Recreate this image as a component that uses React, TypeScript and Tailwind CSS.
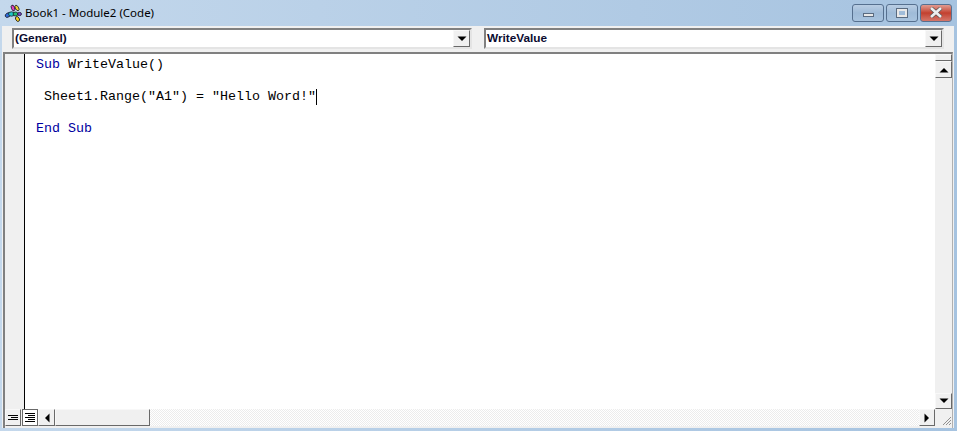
const dots = "bg-[#f0f0f0] bg-[radial-gradient(#dcdcdc_0.5px,transparent_0.6px)] bg-[length:6px_6px]";
const bevel = "border border-t-[#f8f8f8] border-l-[#f8f8f8] border-r-[#696969] border-b-[#696969]";

function Arrow({ dir }: { dir: "up" | "down" | "left" | "right" }) {
  const pts = {
    up: "0.5,7.5 5,3 9.5,7.5",
    down: "0.5,2.5 9.5,2.5 5,7",
    left: "7.5,0.5 7.5,9.5 3,5",
    right: "2.5,0.5 2.5,9.5 7,5",
  }[dir];
  return (
    <svg width="10" height="10" viewBox="0 0 10 10">
      <polygon points={pts} fill="#000" />
    </svg>
  );
}

function Combo({ label }: { label: string }) {
  return (
    <div className="flex h-[21px] flex-1 border-2 border-t-[#808080] border-l-[#808080] border-r-[#e4e4e4] border-b-[#e4e4e4] bg-white">
      <span className="flex-1 pl-[1px] text-[11.8px] leading-[17px] font-bold text-[#0b0b30]">{label}</span>
      <div className={`flex w-[17px] items-center justify-center bg-[#f0f0f0] ${bevel}`}>
        <Arrow dir="down" />
      </div>
    </div>
  );
}

function WinButton({ className, children }: { className: string; children: React.ReactNode }) {
  return (
    <div className={`flex h-[18px] w-[32px] items-center justify-center rounded-[3px] border border-[#56708f] ${className}`}>
      {children}
    </div>
  );
}

export default function App() {
  return (
    <div className="flex h-[431px] w-[957px] flex-col overflow-hidden bg-gradient-to-r from-[#c4d8ec] to-[#a6c3e0] pr-[3px] pb-[3px] pl-[2px] font-['Liberation_Sans',sans-serif]">
      {/* Title bar */}
      <div className="-ml-[2px] flex h-[26px] shrink-0 items-center justify-between pr-[2px] pl-[4px]">
        <div className="flex items-center gap-[3px]">
          <svg width="18" height="18" viewBox="0 0 18 18">
            <g stroke="#1a1a2a" strokeWidth="0.8">
              <ellipse cx="4" cy="11" rx="3" ry="2" fill="#2f6fe0" transform="rotate(-30 4 11)" />
              <ellipse cx="7.5" cy="10" rx="3" ry="2.2" fill="#20c8c8" />
              <ellipse cx="11.5" cy="10" rx="2.4" ry="2" fill="#20c070" />
              <ellipse cx="9" cy="4" rx="1.6" ry="3" fill="#e040c0" transform="rotate(-20 9 4)" />
              <ellipse cx="13" cy="4" rx="1.6" ry="3" fill="#f0d030" transform="rotate(-30 13 4)" />
              <ellipse cx="15.5" cy="10" rx="2" ry="1.6" fill="#7a40d0" />
              <ellipse cx="13.5" cy="15" rx="1.8" ry="2.6" fill="#f4d020" transform="rotate(-30 13.5 15)" />
            </g>
          </svg>
          <span className="font-['Noto_Sans',sans-serif] text-[11.5px] text-black">Book1 - Module2 (Code)</span>
        </div>
        <div className="-mt-[1px] flex gap-[2px]">
          <WinButton className="bg-gradient-to-b from-[#b9cde3] via-[#9fbbd8] to-[#a9c4df]">
            <div className="mt-[4px] h-[4px] w-[11px] border border-[#5a6b80] bg-[#e8e8e8]" />
          </WinButton>
          <WinButton className="bg-gradient-to-b from-[#b9cde3] via-[#9fbbd8] to-[#a9c4df]">
            <div className="h-[8px] w-[10px] border-2 border-[#e8e8e8] outline outline-1 outline-[#5a6b80]" />
          </WinButton>
          <WinButton className="border-[#8a3a35] bg-gradient-to-b from-[#e09a90] via-[#c2402f] to-[#d4766a]">
            <svg width="14" height="11" viewBox="0 0 14 11">
              <path d="M2 1 L12 10 M12 1 L2 10" stroke="#555" strokeWidth="4" />
              <path d="M2 1 L12 10 M12 1 L2 10" stroke="#eee" strokeWidth="2.6" />
            </svg>
          </WinButton>
        </div>
      </div>

      {/* Body */}
      <div className={`flex min-h-0 flex-1 flex-col ${dots}`}>
        {/* Toolbar */}
        <div className="flex h-[26px] shrink-0 gap-[12px] pt-[2px] pr-[10px] pl-[10px]">
          <Combo label="(General)" />
          <Combo label="WriteValue" />
        </div>

        {/* Code pane */}
        <div className="mr-[1px] ml-[1px] flex min-h-0 flex-1 flex-col border-t-2 border-r border-l-2 border-t-[#808080] border-r-[#b0b0b0] border-l-[#808080] pb-[2px]">
          <div className="flex min-h-0 flex-1">
            <div className={`w-[20px] shrink-0 border-r border-r-black ${dots}`} />
            <div className="flex-1 bg-white pt-[3px] pl-[11px] font-['Liberation_Mono',monospace] text-[13.33px] leading-[16px] text-black">
              <div className="text-[#0000a0]">
                Sub <span className="text-black">WriteValue()</span>
              </div>
              <div className="h-[16px]" />
              <div className="flex pl-[8px] whitespace-pre">
                Sheet1.Range("A1") = "Hello Word!"
                <span className="h-[16px] w-px bg-black" />
              </div>
              <div className="h-[16px]" />
              <div className="text-[#0000a0]">End Sub</div>
            </div>
            {/* Vertical scrollbar */}
            <div className={`flex w-[17px] shrink-0 flex-col ${dots}`}>
              <div className={`h-[7px] shrink-0 bg-[#f0f0f0] ${bevel}`} />
              <div className={`flex h-[17px] shrink-0 items-center justify-center bg-[#f0f0f0] ${bevel}`}>
                <Arrow dir="up" />
              </div>
              <div className="flex-1" />
              <div className={`flex h-[16px] shrink-0 items-center justify-center bg-[#f0f0f0] ${bevel}`}>
                <Arrow dir="down" />
              </div>
            </div>
          </div>

          {/* Bottom bar */}
          <div className="flex h-[17px] shrink-0">
            <div className={`flex w-[16px] shrink-0 flex-col items-center justify-center gap-[1px] bg-[#f0f0f0] ${bevel}`}>
              <div className="h-px w-[10px] bg-black" />
              <div className="ml-[3px] h-px w-[7px] bg-black" />
              <div className="h-px w-[10px] bg-black" />
            </div>
            <div className="ml-[1px] flex w-[16px] shrink-0 flex-col items-center justify-center gap-[1px] border border-[#696969] bg-white">
              <div className="h-px w-[10px] bg-black" />
              <div className="ml-[3px] h-px w-[7px] bg-black" />
              <div className="h-px w-[10px] bg-black" />
              <div className="ml-[3px] h-px w-[7px] bg-black" />
              <div className="h-px w-[10px] bg-black" />
            </div>
            <div className={`flex w-[17px] shrink-0 items-center justify-center bg-[#f0f0f0] ${bevel}`}>
              <Arrow dir="left" />
            </div>
            <div className={`w-[95px] shrink-0 ${dots} ${bevel}`} />
            <div className="flex-1 bg-[repeating-conic-gradient(#ececec_0_25%,#ffffff_0_50%)] bg-[length:2px_2px]" />
            <div className={`flex w-[16px] shrink-0 items-center justify-center bg-[#f0f0f0] ${bevel}`}>
              <Arrow dir="right" />
            </div>
            <div className="flex w-[17px] shrink-0 items-end justify-end">
              <svg width="12" height="12" viewBox="0 0 12 12">
                <path d="M11 3 L3 11 M11 6 L6 11 M11 9 L9 11" stroke="#909090" strokeWidth="1" />
              </svg>
            </div>
          </div>
        </div>
      </div>
    </div>
  );
}
